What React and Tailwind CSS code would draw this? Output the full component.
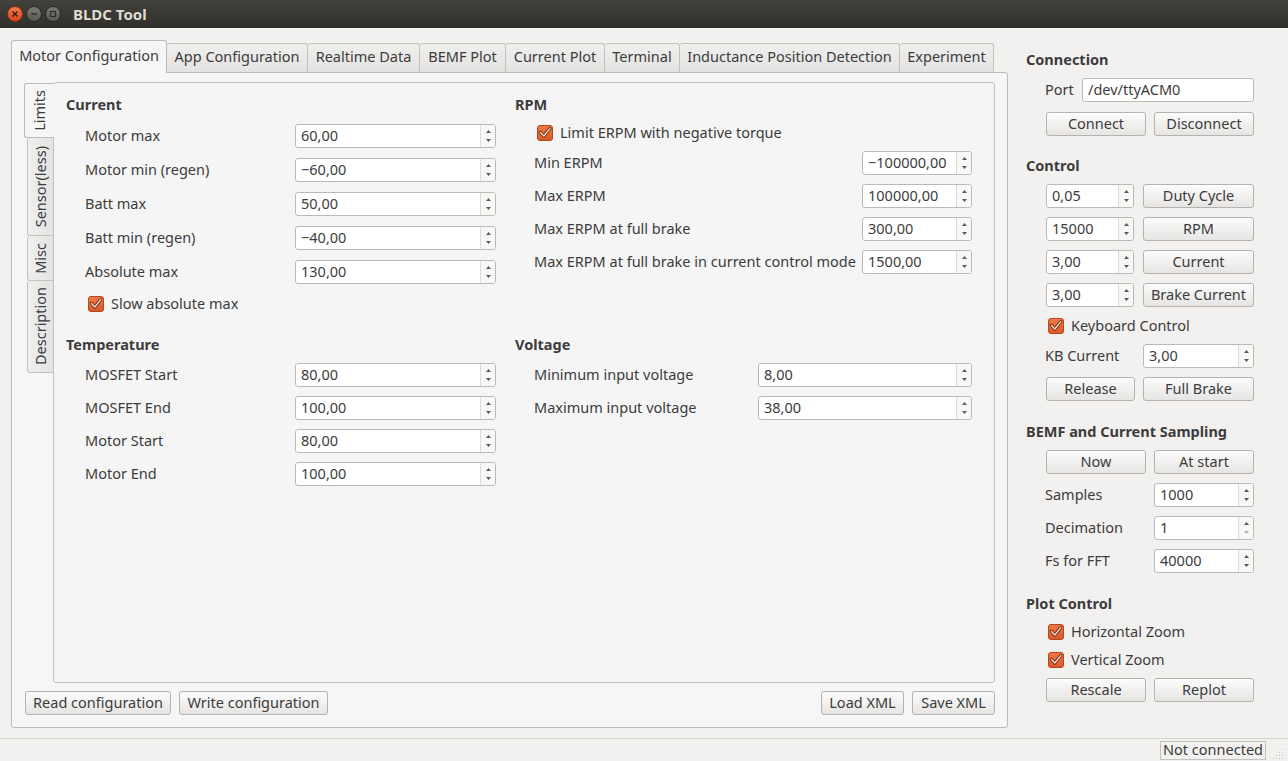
import React from 'react';

const txt = 'text-[14.5px] text-[#3c3c3c]';

const Spin = ({ value, w, dimDown }) => (
  <div className={`flex h-[24px] ${w} border border-[#bcbab6] rounded-[3px] bg-white overflow-hidden shrink-0`}>
    <div className={`flex-1 flex items-center pl-[5px] pb-[2px] ${txt} leading-none`}>{value}</div>
    <div className="w-[15px] border-l border-[#dcdad6] bg-[#f8f8f7] flex flex-col items-center justify-between py-[5px]">
      <svg width="5" height="3" viewBox="0 0 5 3"><path d="M0 3 L2.5 0 L5 3 Z" fill="#5a5a5a" /></svg>
      <svg width="5" height="3" viewBox="0 0 5 3"><path d="M0 0 L2.5 3 L5 0 Z" fill={dimDown ? '#b0b0b0' : '#5a5a5a'} /></svg>
    </div>
  </div>
);

const Btn = ({ children, w }) => (
  <div className={`h-[24px] ${w} shrink-0 flex items-center justify-center pb-[2px] border border-[#b6b3ae] rounded-[3px] bg-linear-to-b from-[#fcfcfc] to-[#e6e5e3] ${txt} leading-none`}>
    {children}
  </div>
);

const Check = ({ label }) => (
  <div className="flex items-center gap-[7px] h-[20px]">
    <svg width="16" height="16" viewBox="0 0 16 16">
      <defs>
        <linearGradient id="cb" x1="0" y1="0" x2="0" y2="1">
          <stop offset="0" stopColor="#ef7a45" />
          <stop offset="1" stopColor="#d9582a" />
        </linearGradient>
      </defs>
      <rect x="0.5" y="0.5" width="15" height="15" rx="2.5" fill="url(#cb)" stroke="#b4461c" />
      <path d="M3.5 7.5 L6.8 11 L12.8 3.6" fill="none" stroke="#6e2a10" strokeWidth="3.2" strokeLinecap="round" strokeLinejoin="round" />
      <path d="M3.5 7.5 L6.8 11 L12.8 3.6" fill="none" stroke="#f6ddd0" strokeWidth="1.4" strokeLinecap="round" strokeLinejoin="round" />
    </svg>
    <span className={`${txt} leading-none pb-[2px]`}>{label}</span>
  </div>
);

const Heading = ({ children, className = '' }) => (
  <div className={`h-[20px] flex items-center pb-[2px] font-bold ${txt} leading-none ${className}`}>{children}</div>
);

const Row = ({ label, value, w, className = '' }) => (
  <div className={`h-[24px] flex items-center pl-[19px] ${className}`}>
    <div className={`flex-1 ${txt} leading-none pb-[2px] whitespace-nowrap`}>{label}</div>
    <Spin value={value} w={w} />
  </div>
);

const topTabs = [
  { t: 'App Configuration', w: 'w-[141px]' },
  { t: 'Realtime Data', w: 'w-[112px]' },
  { t: 'BEMF Plot', w: 'w-[86px]' },
  { t: 'Current Plot', w: 'w-[99px]' },
  { t: 'Terminal', w: 'w-[75px]' },
  { t: 'Inductance Position Detection', w: 'w-[220px]' },
  { t: 'Experiment', w: 'w-[94px]' },
];

const sideTabs = [
  { t: 'Sensor(less)', h: 'h-[98px]' },
  { t: 'Misc', h: 'h-[45px]' },
  { t: 'Description', h: 'h-[92px]' },
];

export default function App() {
  return (
    <div className="w-[1288px] h-[761px] flex flex-col bg-[#f2f1f0] overflow-hidden font-['Noto_Sans',sans-serif]">
      {/* title bar */}
      <div className="h-[28px] shrink-0 flex items-center bg-linear-to-b from-[#42413c] to-[#302f2b] pl-[7px]">
        <div className="flex items-center gap-[3px]">
          <div className="w-[16px] h-[16px] rounded-full bg-linear-to-b from-[#f47c4a] to-[#d8461b] border border-[#8a2f12] flex items-center justify-center">
            <svg width="8" height="8" viewBox="0 0 8 8"><path d="M1.5 1.5 L6.5 6.5 M6.5 1.5 L1.5 6.5" stroke="#3a1408" strokeWidth="1.3" /></svg>
          </div>
          <div className="w-[16px] h-[16px] rounded-full bg-linear-to-b from-[#7a7974] to-[#5a5954] border border-[#2a2926] flex items-center justify-center">
            <svg width="8" height="8" viewBox="0 0 8 8"><path d="M1 4 L7 4" stroke="#2f2e2a" strokeWidth="1.4" /></svg>
          </div>
          <div className="w-[16px] h-[16px] rounded-full bg-linear-to-b from-[#7a7974] to-[#5a5954] border border-[#2a2926] flex items-center justify-center">
            <svg width="8" height="8" viewBox="0 0 8 8"><rect x="1.5" y="1.5" width="5" height="5" fill="none" stroke="#2f2e2a" strokeWidth="1.2" /></svg>
          </div>
        </div>
        <div className="ml-[12px] text-[15px] font-bold text-[#dfdbd2] leading-none">BLDC Tool</div>
      </div>

      {/* main */}
      <div className="flex-1 flex min-h-0">
        {/* left: tab widget */}
        <div className="w-[1008px] shrink-0 pl-[11px] pt-[11px] flex flex-col">
          <div className="flex items-end h-[33px]">
            <div className={`w-[156px] h-[33px] flex items-center justify-center border border-b-0 border-[#bdbbb7] rounded-t-[3px] bg-[#f6f6f6] ${txt} leading-none relative z-10 -mb-px pb-[4px]`}>
              Motor Configuration
            </div>
            {topTabs.map((tb) => (
              <div key={tb.t} className={`${tb.w} h-[29px] flex items-center justify-center border border-l-0 border-b-0 border-[#c3c1bd] rounded-t-[3px] bg-linear-to-b from-[#efefee] to-[#e4e3e1] ${txt} leading-none pb-[4px] whitespace-nowrap`}>
                {tb.t}
              </div>
            ))}
          </div>
          {/* pane */}
          <div className="w-[997px] h-[656px] border border-[#bdbbb7] rounded-b-[3px] rounded-tr-[3px] bg-[#f6f6f6] pl-[12px] pr-[12px] pt-[9px] flex flex-col">
            <div className="flex h-[601px]">
              {/* vertical tabs */}
              <div className="w-[29px] shrink-0 flex flex-col items-end pt-px">
                <div className={`self-start w-[30px] h-[55px] border border-r-0 border-[#bdbbb7] rounded-l-[3px] bg-[#f6f6f6] flex items-center justify-center relative z-10 -mr-px ${txt}`}>
                  <span className="[writing-mode:vertical-rl] rotate-180 leading-none">Limits</span>
                </div>
                {sideTabs.map((s) => (
                  <div key={s.t} className={`w-[26px] ${s.h} border border-r-0 border-t-0 border-[#c3c1bd] rounded-l-[3px] bg-linear-to-r from-[#efefee] to-[#e4e3e1] flex items-center justify-center ${txt}`}>
                    <span className="[writing-mode:vertical-rl] rotate-180 leading-none whitespace-nowrap">{s.t}</span>
                  </div>
                ))}
              </div>
              {/* page */}
              <div className="w-[943px] h-[601px] border border-[#c3c1bd] rounded-[3px] bg-[#f5f5f5] pl-[12px] pt-[12px] flex gap-[19px]">
                {/* left column */}
                <div className="w-[430px] flex flex-col">
                  <Heading>Current</Heading>
                  <Row className="mt-[9px]" label="Motor max" value="60,00" w="w-[201px]" />
                  <Row className="mt-[10px]" label="Motor min (regen)" value="−60,00" w="w-[201px]" />
                  <Row className="mt-[10px]" label="Batt max" value="50,00" w="w-[201px]" />
                  <Row className="mt-[10px]" label="Batt min (regen)" value="−40,00" w="w-[201px]" />
                  <Row className="mt-[10px]" label="Absolute max" value="130,00" w="w-[201px]" />
                  <div className="mt-[10px] pl-[22px]"><Check label="Slow absolute max" /></div>
                  <Heading className="mt-[21px]">Temperature</Heading>
                  <Row className="mt-[8px]" label="MOSFET Start" value="80,00" w="w-[201px]" />
                  <Row className="mt-[9px]" label="MOSFET End" value="100,00" w="w-[201px]" />
                  <Row className="mt-[9px]" label="Motor Start" value="80,00" w="w-[201px]" />
                  <Row className="mt-[9px]" label="Motor End" value="100,00" w="w-[201px]" />
                </div>
                {/* right column */}
                <div className="w-[457px] flex flex-col">
                  <Heading>RPM</Heading>
                  <div className="mt-[8px] pl-[22px]"><Check label="Limit ERPM with negative torque" /></div>
                  <Row className="mt-[8px]" label="Min ERPM" value="−100000,00" w="w-[110px]" />
                  <Row className="mt-[9px]" label="Max ERPM" value="100000,00" w="w-[110px]" />
                  <Row className="mt-[9px]" label="Max ERPM at full brake" value="300,00" w="w-[110px]" />
                  <Row className="mt-[9px]" label="Max ERPM at full brake in current control mode" value="1500,00" w="w-[110px]" />
                  <Heading className="mt-[61px]">Voltage</Heading>
                  <Row className="mt-[8px]" label="Minimum input voltage" value="8,00" w="w-[214px]" />
                  <Row className="mt-[9px]" label="Maximum input voltage" value="38,00" w="w-[214px]" />
                </div>
              </div>
            </div>
            <div className="mt-[8px] flex items-center pl-px">
              <Btn w="w-[146px]">Read configuration</Btn>
              <div className="ml-[8px]"><Btn w="w-[149px]">Write configuration</Btn></div>
              <div className="flex-1" />
              <Btn w="w-[83px]">Load XML</Btn>
              <div className="ml-[8px]"><Btn w="w-[83px]">Save XML</Btn></div>
            </div>
          </div>
        </div>

        {/* right panel */}
        <div className="pl-[18px] w-[246px] flex flex-col pt-[22px]">
          <Heading>Connection</Heading>
          <div className="mt-[8px] h-[24px] flex items-center pl-[19px]">
            <div className={`w-[37px] ${txt} leading-none pb-[2px]`}>Port</div>
            <div className={`w-[172px] h-[24px] border border-[#bcbab6] rounded-[3px] bg-white flex items-center pl-[5px] pb-[2px] ${txt} leading-none`}>/dev/ttyACM0</div>
          </div>
          <div className="mt-[10px] flex pl-[20px] gap-[8px]">
            <Btn w="w-[100px]">Connect</Btn>
            <Btn w="w-[100px]">Disconnect</Btn>
          </div>

          <Heading className="mt-[20px]">Control</Heading>
          {[['0,05', 'Duty Cycle'], ['15000', 'RPM'], ['3,00', 'Current'], ['3,00', 'Brake Current']].map(([v, b], i) => (
            <div key={b} className={`${i === 0 ? 'mt-[8px]' : 'mt-[9px]'} flex pl-[20px] gap-[9px]`}>
              <Spin value={v} w="w-[88px]" />
              <Btn w="w-[111px]">{b}</Btn>
            </div>
          ))}
          <div className="mt-[9px] pl-[22px]"><Check label="Keyboard Control" /></div>
          <div className="mt-[8px] h-[24px] flex items-center pl-[19px]">
            <div className={`w-[98px] ${txt} leading-none pb-[2px]`}>KB Current</div>
            <Spin value="3,00" w="w-[111px]" />
          </div>
          <div className="mt-[9px] flex pl-[20px] gap-[8px]">
            <Btn w="w-[89px]">Release</Btn>
            <Btn w="w-[111px]">Full Brake</Btn>
          </div>

          <Heading className="mt-[21px]">BEMF and Current Sampling</Heading>
          <div className="mt-[8px] flex pl-[20px] gap-[8px]">
            <Btn w="w-[100px]">Now</Btn>
            <Btn w="w-[100px]">At start</Btn>
          </div>
          {[['Samples', '1000', false], ['Decimation', '1', true], ['Fs for FFT', '40000', false]].map(([l, v, d]) => (
            <div key={l} className="mt-[9px] h-[24px] flex items-center pl-[19px]">
              <div className={`w-[109px] ${txt} leading-none pb-[2px]`}>{l}</div>
              <Spin value={v} w="w-[100px]" dimDown={d} />
            </div>
          ))}

          <Heading className="mt-[21px]">Plot Control</Heading>
          <div className="mt-[8px] pl-[22px]"><Check label="Horizontal Zoom" /></div>
          <div className="mt-[8px] pl-[22px]"><Check label="Vertical Zoom" /></div>
          <div className="mt-[8px] flex pl-[20px] gap-[8px]">
            <Btn w="w-[100px]">Rescale</Btn>
            <Btn w="w-[100px]">Replot</Btn>
          </div>
        </div>
      </div>

      {/* status bar */}
      <div className="h-[23px] shrink-0 border-t border-[#d8d6d2] flex items-center justify-end pr-[4px]">
        <div className={`h-[19px] px-[2px] pb-[2px] border border-[#c4c2be] flex items-center ${txt} leading-none`}>Not connected</div>
        <svg className="ml-[6px] self-end mb-[2px]" width="12" height="12" viewBox="0 0 12 12">
          <g fill="#c8c6c2">
            <rect x="10" y="2" width="1" height="1" /><rect x="7" y="5" width="1" height="1" /><rect x="10" y="5" width="1" height="1" />
            <rect x="4" y="8" width="1" height="1" /><rect x="7" y="8" width="1" height="1" /><rect x="10" y="8" width="1" height="1" />
            <rect x="1" y="11" width="1" height="1" /><rect x="4" y="11" width="1" height="1" /><rect x="7" y="11" width="1" height="1" /><rect x="10" y="11" width="1" height="1" />
          </g>
        </svg>
      </div>
    </div>
  );
}
